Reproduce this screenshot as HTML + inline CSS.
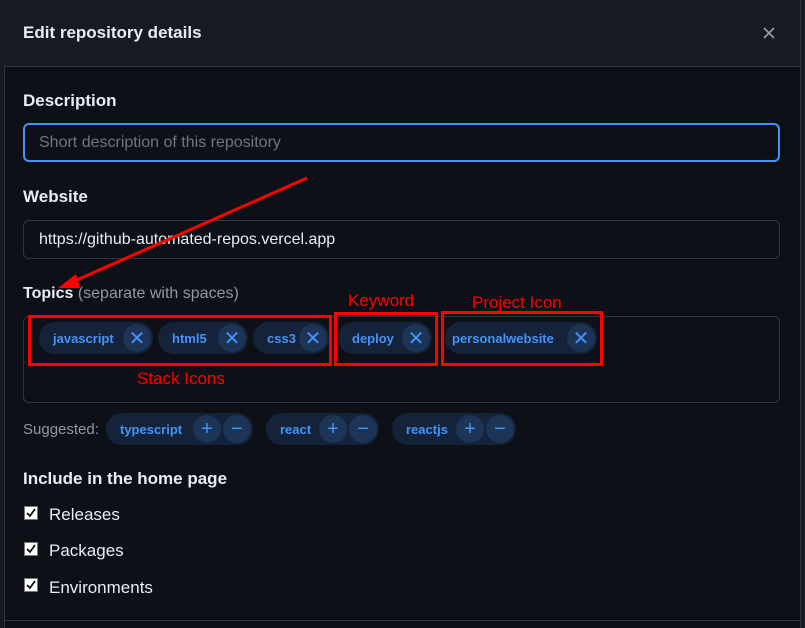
<!DOCTYPE html>
<html><head><style>
body{margin:0;width:805px;height:628px;background:#0d1117;position:relative;overflow:hidden;font-family:"Liberation Sans",sans-serif;color:#e6edf3}
.a{position:absolute}
.hdr{left:4px;top:0;width:796px;height:66px;background:#161b22;border-bottom:1px solid #30363d}
.lbl{font-weight:bold;font-size:16px;color:#e6edf3}
.inp{box-sizing:border-box;border-radius:6px;background:#0d1117;border:1px solid #30363d;font-size:16px;padding-left:15px;display:flex;align-items:center}
.pill{position:absolute;height:32px;border-radius:16px;background:#142339;color:#4493f8;font-weight:bold;font-size:13px;display:flex;align-items:center;padding-left:14px;box-sizing:border-box;justify-content:space-between;padding-right:2px}
.c{width:28px;height:28px;border-radius:14px;background:#1c3456;display:flex;align-items:center;justify-content:center;font-size:20px;font-weight:normal}
.cs{display:flex;gap:2px}
.red{position:absolute;border:3px solid #f00;box-sizing:border-box}
.rt{position:absolute;color:#f00;font-size:17px}
.cb{position:absolute;left:24px}
.cl{position:absolute;left:49px;font-size:17px;color:#e6edf3}
</style></head><body>
<div class="a" style="left:0;top:0;width:4px;height:628px;background:#161b22;border-right:1px solid #30363d"></div>
<div class="a" style="left:800px;top:0;width:5px;height:628px;background:#161b22;border-left:1px solid #30363d"></div>
<div class="a hdr"></div>
<div class="a" style="left:23px;top:23px;font-size:17px;font-weight:bold;color:#e6edf3">Edit repository details</div>
<svg class="a" style="left:763px;top:27px" width="12" height="12"><path d="M1 1L11 11M11 1L1 11" stroke="#9198a1" stroke-width="1.8"/></svg>
<div class="a lbl" style="left:23px;top:91px;font-size:17px">Description</div>
<div class="a inp" style="left:23px;top:123px;width:757px;height:39px;border:2px solid #4493f8;color:#6e7681;padding-left:14px">Short description of this repository</div>
<div class="a lbl" style="left:23px;top:187px;font-size:17px">Website</div>
<div class="a inp" style="left:23px;top:220px;width:757px;height:39px;color:#e6edf3">https://github-automated-repos.vercel.app</div>
<div class="a" style="left:23px;top:285px;font-size:16px"><b>Topics</b> <span style="color:#9198a1">(separate with spaces)</span></div>
<div class="a" style="left:23px;top:316px;width:757px;height:87px;border:1px solid #30363d;border-radius:6px;box-sizing:border-box"></div>
<div class="pill" style="left:39px;top:322px;width:114px">javascript<div class="c">✕</div></div>
<div class="pill" style="left:158px;top:322px;width:90px">html5<div class="c">✕</div></div>
<div class="pill" style="left:253px;top:322px;width:76px">css3<div class="c">✕</div></div>
<div class="pill" style="left:338px;top:322px;width:94px">deploy<div class="c">✕</div></div>
<div class="pill" style="left:445px;top:322px;width:152px;padding-left:7px">personalwebsite<div class="c">✕</div></div>
<div class="red" style="left:28px;top:315px;width:304px;height:51px"></div>
<div class="red" style="left:334px;top:312px;width:104px;height:54px"></div>
<div class="red" style="left:441px;top:311px;width:162px;height:55px"></div>
<div class="rt" style="left:137px;top:369px">Stack Icons</div>
<div class="rt" style="left:348px;top:291px">Keyword</div>
<div class="rt" style="left:472px;top:293px">Project Icon</div>
<svg class="a" style="left:0;top:0" width="805" height="628"><line x1="307" y1="178" x2="70" y2="283" stroke="#f00" stroke-width="3"/><polygon points="58,288 76,274 80,288" fill="#f00"/></svg>
<div class="a" style="left:23px;top:421px;font-size:15px;color:#9198a1">Suggested:</div>
<div class="pill" style="left:106px;top:413px;width:147px">typescript<div class="cs"><div class="c">+</div><div class="c">−</div></div></div>
<div class="pill" style="left:266px;top:413px;width:113px">react<div class="cs"><div class="c">+</div><div class="c">−</div></div></div>
<div class="pill" style="left:392px;top:413px;width:124px">reactjs<div class="cs"><div class="c">+</div><div class="c">−</div></div></div>
<div class="a lbl" style="left:23px;top:469px;font-size:17px">Include in the home page</div>
<svg class="cb" style="top:506px" width="14" height="14"><rect x="0.5" y="0.5" width="13" height="13" fill="#fff" stroke="#777"/><path d="M3 7L6 10L11 3" stroke="#000" stroke-width="1.6" fill="none"/></svg><div class="cl" style="top:505px">Releases</div>
<svg class="cb" style="top:542px" width="14" height="14"><rect x="0.5" y="0.5" width="13" height="13" fill="#fff" stroke="#777"/><path d="M3 7L6 10L11 3" stroke="#000" stroke-width="1.6" fill="none"/></svg><div class="cl" style="top:541px">Packages</div>
<svg class="cb" style="top:578px" width="14" height="14"><rect x="0.5" y="0.5" width="13" height="13" fill="#fff" stroke="#777"/><path d="M3 7L6 10L11 3" stroke="#000" stroke-width="1.6" fill="none"/></svg><div class="cl" style="top:578px">Environments</div>
<div class="a" style="left:4px;top:620px;width:796px;height:1px;background:#30363d"></div>
</body></html>
